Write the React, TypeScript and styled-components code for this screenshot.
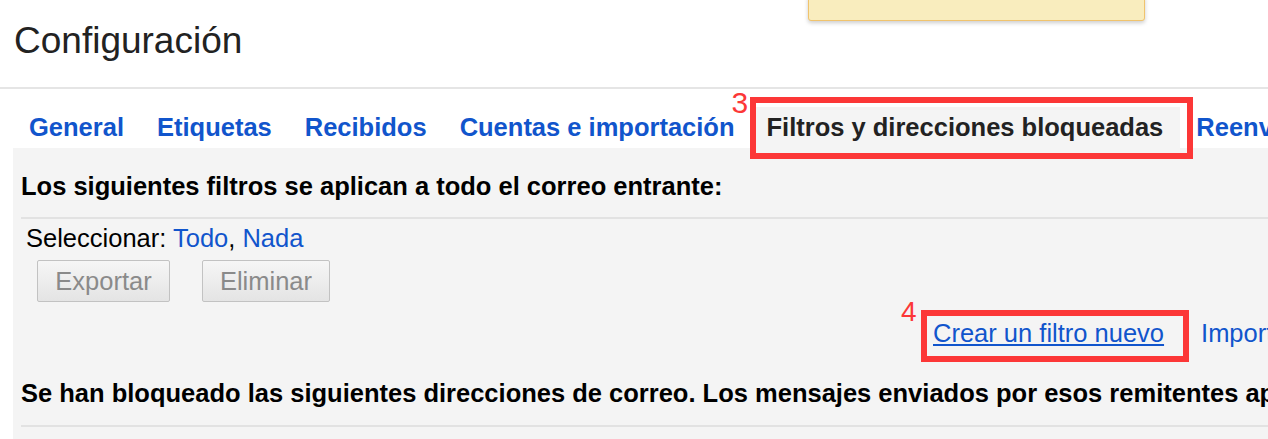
import React from 'react';
import styled, { createGlobalStyle } from 'styled-components';

const GlobalStyle = createGlobalStyle`
  html, body {
    margin: 0;
    padding: 0;
    background: #ffffff;
    overflow: hidden;
  }

  body {
    font-family: "Liberation Sans", Arial, sans-serif;
    color: #222222;
  }
`;

const Page = styled.div`
  position: relative;
  width: 100%;
  height: 439px;
  overflow: hidden;
`;

const Notice = styled.div`
  position: absolute;
  top: -4px;
  left: 808px;
  width: 335px;
  height: 23px;
  background: #f9edbe;
  border: 1px solid #f0c36d;
  border-radius: 0 0 3px 3px;
  box-shadow: 0 2px 4px rgba(0, 0, 0, 0.2);
`;

const Header = styled.header`
  height: 89px;
  box-sizing: border-box;
  border-bottom: 2px solid #e5e5e5;
  padding: 0 14px;
`;

const Title = styled.h1`
  margin: 0;
  padding-top: 20px;
  font-size: 37px;
  font-weight: 400;
  line-height: 42px;
  color: #222222;
`;

const TabBar = styled.nav`
  display: flex;
  align-items: flex-end;
  margin-left: 13px;
  padding-top: 18px;
  white-space: nowrap;
`;

const TabWrap = styled.div`
  position: relative;
  flex-shrink: 0;
`;

const Tab = styled.a<{ $active?: boolean }>`
  display: block;
  flex-shrink: 0;
  height: 41px;
  line-height: 41px;
  padding: 0 17px 0 ${p => (p.$active ? '15px' : '16px')};
  font-size: 25.5px;
  font-weight: 700;
  color: ${p => (p.$active ? '#222222' : '#1155cc')};
  background: ${p => (p.$active ? '#f4f4f4' : 'transparent')};
  text-decoration: none;
  cursor: pointer;
`;

const Highlight = styled.span<{ $top: number; $right: number; $bottom: number; $left: number }>`
  position: absolute;
  top: ${p => p.$top}px;
  right: ${p => p.$right}px;
  bottom: ${p => p.$bottom}px;
  left: ${p => p.$left}px;
  border: 6px solid #fc3737;
  pointer-events: none;
`;

const StepLabel = styled.span<{ $top: number; $left: number; $size: number }>`
  position: absolute;
  top: ${p => p.$top}px;
  left: ${p => p.$left}px;
  font-size: ${p => p.$size}px;
  line-height: 1;
  color: #fc3737;
  font-weight: 400;
`;

const Panel = styled.section`
  margin-left: 13px;
  background: #f4f4f4;
  padding: 24px 0 12px 8px;
`;

const SectionTitle = styled.h2<{ $gap?: number }>`
  margin: ${p => p.$gap ?? 0}px 0 0;
  font-size: 25.5px;
  line-height: 29px;
  font-weight: 700;
  color: #000000;
  white-space: nowrap;
`;

const Divider = styled.div<{ $gap: number }>`
  height: 2px;
  background: #e2e2e2;
  margin-top: ${p => p.$gap}px;
`;

const SelectRow = styled.div`
  margin-top: 5px;
  padding-left: 5px;
  font-size: 25.5px;
  line-height: 29px;
  color: #000000;
`;

const InlineLink = styled.a<{ $underline?: boolean }>`
  color: #1155cc;
  text-decoration: ${p => (p.$underline ? 'underline' : 'none')};
  text-underline-offset: 2px;
  cursor: pointer;
`;

const ButtonRow = styled.div`
  display: flex;
  gap: 32px;
  margin-top: 7px;
  padding-left: 16px;
`;

const Button = styled.button<{ $width: number }>`
  width: ${p => p.$width}px;
  height: 42px;
  box-sizing: border-box;
  padding: 0;
  border: 1px solid #c2c2c2;
  border-radius: 2px;
  background: linear-gradient(#f6f6f6, #e4e4e4);
  font-family: inherit;
  font-size: 25.5px;
  color: #8a8a8a;
  cursor: default;
`;

const ActionRow = styled.div`
  display: flex;
  gap: 37px;
  margin-top: 17px;
  padding-left: 912px;
  font-size: 25.5px;
  line-height: 29px;
  white-space: nowrap;
`;

const ActionWrap = styled.div`
  position: relative;
  flex-shrink: 0;
`;

const tabs = ['General', 'Etiquetas', 'Recibidos', 'Cuentas e importación'];

const App: React.FC = () => {
  return (
    <Page>
      <GlobalStyle />
      <Notice />
      <Header>
        <Title>Configuración</Title>
      </Header>

      <TabBar>
        {tabs.map(t => (
          <Tab key={t}>{t}</Tab>
        ))}
        <TabWrap>
          <Tab $active>Filtros y direcciones bloqueadas</Tab>
          <Highlight $top={-10} $right={-13} $bottom={-11} $left={-2} />
          <StepLabel $top={-19} $left={-20} $size={30}>3</StepLabel>
        </TabWrap>
        <Tab>Reenvío y correo POP/IMAP</Tab>
      </TabBar>

      <Panel>
        <SectionTitle>Los siguientes filtros se aplican a todo el correo entrante:</SectionTitle>
        <Divider $gap={16} />
        <SelectRow>
          Seleccionar: <InlineLink>Todo</InlineLink>, <InlineLink>Nada</InlineLink>
        </SelectRow>
        <ButtonRow>
          <Button $width={133} disabled>Exportar</Button>
          <Button $width={128} disabled>Eliminar</Button>
        </ButtonRow>
        <ActionRow>
          <ActionWrap>
            <InlineLink $underline>Crear un filtro nuevo</InlineLink>
            <Highlight $top={-9} $right={-25} $bottom={-14} $left={-12} />
            <StepLabel $top={-21} $left={-32} $size={28}>4</StepLabel>
          </ActionWrap>
          <InlineLink>Importar filtros</InlineLink>
        </ActionRow>
        <SectionTitle $gap={31}>
          Se han bloqueado las siguientes direcciones de correo. Los mensajes enviados por esos remitentes aparecerán en la carpeta Spam:
        </SectionTitle>
        <Divider $gap={17} />
      </Panel>
    </Page>
  );
};

export default App;
